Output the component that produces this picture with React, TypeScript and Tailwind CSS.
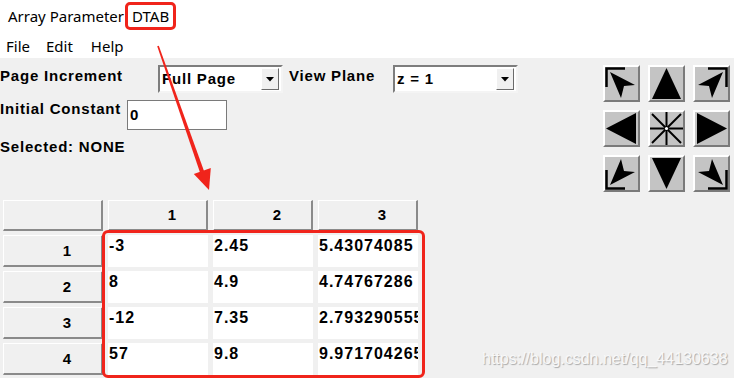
import type { ReactNode } from "react";

const bold = "font-['Liberation_Sans',Arial,sans-serif] font-bold tracking-[0.8px]";

function Combo({ value, width }: { value: string; width: string }) {
  return (
    <div
      className={`${width} h-[28px] flex items-stretch bg-white border-2 border-t-[#7d7d7d] border-l-[#7d7d7d] border-b-[#f4f4f4] border-r-[#f4f4f4]`}
    >
      <div className={`flex-1 flex items-center pl-[2px] text-[15px] text-black ${bold}`}>{value}</div>
      <div className="w-[18px] my-[1px] mr-[2px] bg-[#f0f0f0] border border-t-white border-l-white border-b-[#6b6b6b] border-r-[#6b6b6b] flex items-center justify-center">
        <svg width="8" height="5" viewBox="0 0 8 5">
          <polygon points="0,0 8,0 4,4.5" fill="#000" />
        </svg>
      </div>
    </div>
  );
}

function NavButton({ children }: { children: ReactNode }) {
  return (
    <div className="relative w-[37px] h-[37px] bg-[#c4c4c4] border-2 border-t-white border-l-white border-b-[#7a7a7a] border-r-[#7a7a7a]">
      <svg className="absolute left-[-2px] top-[-2px]" width="37" height="37" viewBox="0 0 37 37">
        {children}
      </svg>
    </div>
  );
}

function HeadCell({ label }: { label?: string }) {
  return (
    <div
      className={`h-full bg-[#f0f0f0] border-t border-l border-t-white border-l-white border-r-2 border-b-2 border-r-[#8a8a8a] border-b-[#8a8a8a] flex items-center justify-end pr-[29px] pt-[1px] text-[15px] text-black ${bold}`}
    >
      {label}
    </div>
  );
}

function DataCell({ value }: { value: string }) {
  return (
    <div
      className={`h-full bg-white overflow-hidden whitespace-nowrap pl-[1px] pt-[2px] text-[16px] leading-[18px] text-black font-['Liberation_Sans',Arial,sans-serif] font-bold tracking-[1px]`}
    >
      {value}
    </div>
  );
}

const rows = [
  ["1", "-3", "2.45", "5.43074085"],
  ["2", "8", "4.9", "4.74767286"],
  ["3", "-12", "7.35", "2.7932905559"],
  ["4", "57", "9.8", "9.9717042659"],
];

export default function App() {
  return (
    <div className="relative w-[734px] h-[378px] overflow-hidden bg-[#f0f0f0]">
      {/* window title + menu */}
      <div className="h-[58px] bg-white font-['Noto_Sans',sans-serif] text-black">
        <div className="h-[32px] flex items-center pl-[8px] text-[15px]">
          <span>Array Parameter</span>
          <span className="ml-[1px] h-[28px] flex items-center px-[4px] border-[3px] border-[#f0241b] rounded-[5px]">
            DTAB
          </span>
        </div>
        <div className="h-[26px] flex items-center pt-[2px] text-[15px]">
          <span className="ml-[6px]">File</span>
          <span className="ml-[16px]">Edit</span>
          <span className="ml-[18px]">Help</span>
        </div>
      </div>

      {/* controls */}
      <div className="h-[142px] flex">
        <div className="flex-1 pt-[7px] text-[15px] leading-[18px] text-black">
          <div className="h-[28px] flex items-start">
            <span className={`w-[158px] pt-[2px] ${bold}`}>Page Increment</span>
            <Combo value="Full Page" width="w-[125px]" />
            <span className={`w-[110px] pl-[6px] pt-[2px] ${bold}`}>View Plane</span>
            <Combo value="z = 1" width="w-[125px]" />
          </div>
          <div className="mt-[7px] h-[30px] flex items-start">
            <span className={`w-[127px] ${bold}`}>Initial Constant</span>
            <div className={`w-[100px] h-[30px] bg-white border border-[#7a7a7a] flex items-center pl-[2px] ${bold}`}>
              0
            </div>
          </div>
          <div className={`mt-[5px] h-[24px] flex items-center ${bold}`}>Selected: NONE</div>
        </div>

        <div className="pt-[7px] pr-[4px]">
          <div className="grid grid-cols-[37px_37px_37px] gap-[8px]">
            <NavButton>
              <path d="M3.5 22 V3.5 H22" stroke="#000" strokeWidth="2.5" fill="none" />
              <polygon points="7,7 32,20 21,21 18,33" fill="#000" />
            </NavButton>
            <NavButton>
              <polygon points="18.5,3 4,34 33,34" fill="#000" />
            </NavButton>
            <NavButton>
              <path d="M33.5 22 V3.5 H15" stroke="#000" strokeWidth="2.5" fill="none" />
              <polygon points="30,7 5,20 16,21 19,33" fill="#000" />
            </NavButton>
            <NavButton>
              <polygon points="3,18.5 33,3 33,34" fill="#000" />
            </NavButton>
            <NavButton>
              <g stroke="#000" strokeWidth="2">
                <line x1="4" y1="4" x2="33" y2="33" />
                <line x1="33" y1="4" x2="4" y2="33" />
                <line x1="18.5" y1="2" x2="18.5" y2="35" />
                <line x1="2" y1="18.5" x2="35" y2="18.5" />
              </g>
              <circle cx="18.5" cy="18.5" r="1.6" fill="#fff" />
            </NavButton>
            <NavButton>
              <polygon points="34,18.5 4,3 4,34" fill="#000" />
            </NavButton>
            <NavButton>
              <path d="M3.5 15 V33.5 H22" stroke="#000" strokeWidth="2.5" fill="none" />
              <polygon points="7,30 32,17 21,16 18,4" fill="#000" />
            </NavButton>
            <NavButton>
              <polygon points="4,3 33,3 18.5,34" fill="#000" />
            </NavButton>
            <NavButton>
              <path d="M33.5 15 V33.5 H15" stroke="#000" strokeWidth="2.5" fill="none" />
              <polygon points="30,30 5,17 16,16 19,4" fill="#000" />
            </NavButton>
          </div>
        </div>
      </div>

      {/* table */}
      <div className="ml-[3px] grid grid-cols-[100px_100px_100px_100px] grid-rows-[31px_32px_32px_32px_32px] gap-x-[5px] gap-y-[4px]">
        <HeadCell />
        <HeadCell label="1" />
        <HeadCell label="2" />
        <HeadCell label="3" />
        {rows.map((r) => (
          <div key={r[0]} className="contents">
            <HeadCell label={r[0]} />
            <DataCell value={r[1]} />
            <DataCell value={r[2]} />
            <DataCell value={r[3]} />
          </div>
        ))}
      </div>

      {/* annotations */}
      <div className="absolute left-[102px] top-[230px] w-[323px] h-[148px] border-[3px] border-[#f0241b] rounded-[6px]" />
      <svg className="absolute left-0 top-0 pointer-events-none" width="734" height="378" viewBox="0 0 734 378">
        <polygon points="157.2,46.3 158.8,45.7 204,171 200,172.5" fill="#f0241b" />
        <polygon points="209,190 193.8,174.1 210.8,168.1" fill="#f0241b" />
      </svg>
      <div className="absolute left-[482px] top-[347px] text-[16px] font-['Liberation_Sans',Arial,sans-serif] text-[#f8f8f8] [text-shadow:1px_1px_1px_rgba(0,0,0,0.3)]">
        https://blog.csdn.net/qq_44130638
      </div>
    </div>
  );
}
